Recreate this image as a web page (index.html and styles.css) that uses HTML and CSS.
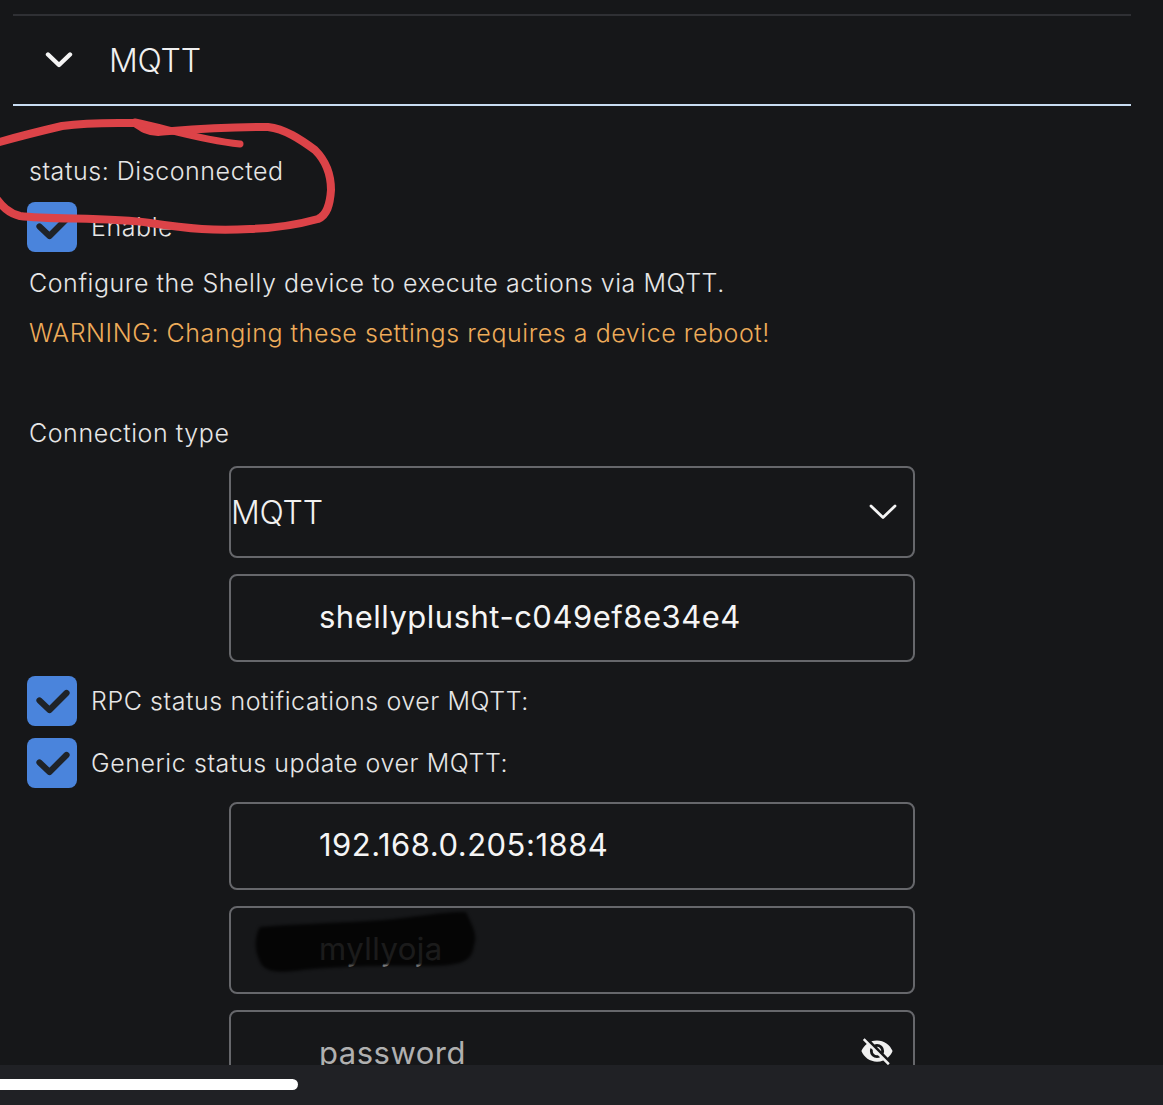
FILE: index.html
```html
<!DOCTYPE html>
<html lang="en">
  <head>
    <meta charset="UTF-8" />
    <meta name="viewport" content="width=device-width, initial-scale=1.0" />
    <title>MQTT</title>
    <link rel="stylesheet" href="styles.css">
  </head>
  <body>
    <div class="page">
      <main class="content">
        <section class="panel">
          <div class="panel-head">
            <svg class="head-chevron" viewBox="0 0 28 18" width="28" height="18">
              <path d="M3 3.5 L14 14 L25 3.5" fill="none" stroke="#f4f4f4" stroke-width="4.4" stroke-linecap="round" stroke-linejoin="round"></path>
            </svg>
            <span class="head-title">MQTT</span>
          </div>

          <div class="panel-body">
            <p class="line line-status">status: Disconnected</p>
            <div class="check-row check-enable">
              <span class="checkbox">
                <svg viewBox="0 0 50 50" width="50" height="50"><path d="M12.5 24.5 L22.5 34 L39.5 17" fill="none" stroke="#1f2328" stroke-width="6.2" stroke-linecap="round" stroke-linejoin="round"></path></svg>
              </span>
              <span class="check-label">Enable</span>
            </div>
            <p class="line">Configure the Shelly device to execute actions via MQTT.</p>
            <p class="line warning">WARNING: Changing these settings requires a device reboot!</p>
            <p class="line line-type">Connection type</p>

            <div class="field field-select">
              <span class="select-value">MQTT</span>
              <svg viewBox="0 0 28 18" width="28" height="18">
                <path d="M2 3 L14 14.5 L26 3" fill="none" stroke="#f4f4f4" stroke-width="2.8" stroke-linecap="round" stroke-linejoin="round"></path>
              </svg>
            </div>
            <div class="field field-tight"><span class="field-text">shellyplusht-c049ef8e34e4</span></div>

            <div class="check-row check-first">
              <span class="checkbox">
                <svg viewBox="0 0 50 50" width="50" height="50"><path d="M12.5 24.5 L22.5 34 L39.5 17" fill="none" stroke="#1f2328" stroke-width="6.2" stroke-linecap="round" stroke-linejoin="round"></path></svg>
              </span>
              <span class="check-label">RPC status notifications over MQTT:</span>
            </div>
            <div class="check-row check-second">
              <span class="checkbox">
                <svg viewBox="0 0 50 50" width="50" height="50"><path d="M12.5 24.5 L22.5 34 L39.5 17" fill="none" stroke="#1f2328" stroke-width="6.2" stroke-linecap="round" stroke-linejoin="round"></path></svg>
              </span>
              <span class="check-label">Generic status update over MQTT:</span>
            </div>

            <div class="field"><span class="field-text">192.168.0.205:1884</span></div>
            <div class="field field-masked">
              <span class="field-text">myllyoja</span>
              <svg class="scribble" viewBox="0 0 230 70" width="230" height="70">
                <path d="M6 16 C40 13 90 12 130 9 C160 6 195 0 212 1 C218 14 224 24 220 34 C218 50 210 55 170 55 C120 54 70 56 40 60 C20 62 8 60 5 48 C0 38 1 24 6 16Z" fill="#030303" fill-opacity="0.9"></path>
              </svg>
            </div>
            <div class="field field-password">
              <span class="field-text placeholder">password</span>
              <svg class="eye" viewBox="0 0 24 24" width="34" height="34">
                <path fill="#f0f0f0" d="M11.83,9L15,12.16C15,12.11 15,12.05 15,12A3,3 0 0,0 12,9C11.94,9 11.89,9 11.83,9M7.53,9.8L9.08,11.35C9.03,11.56 9,11.77 9,12A3,3 0 0,0 12,15C12.22,15 12.44,14.97 12.65,14.92L14.2,16.47C13.53,16.8 12.79,17 12,17A5,5 0 0,1 7,12C7,11.21 7.2,10.47 7.53,9.8M2,4.27L4.28,6.55L4.73,7C3.08,8.3 1.78,10 1,12C2.73,16.39 7,19.5 12,19.5C13.55,19.5 15.03,19.2 16.38,18.66L16.81,19.08L19.73,22L21,20.73L3.27,3M12,7A5,5 0 0,1 17,12C17,12.64 16.87,13.26 16.64,13.82L19.57,16.75C21.07,15.5 22.27,13.86 23,12C21.27,7.61 17,4.5 12,4.5C10.6,4.5 9.26,4.75 8,5.2L10.17,7.35C10.74,7.13 11.35,7 12,7Z"></path>
              </svg>
            </div>
          </div>
        </section>

        <!-- red pen mark drawn on top of the screenshot -->
        <svg class="annotation" viewBox="0 0 340 240" width="340" height="240">
          <path d="M-4 143 C20 136 45 130 62 126 C90 122 115 123 135 123 C142 128 148 132 158 132 C185 130 215 127 268 127 C285 129 300 139 315 150 C325 160 331 172 331 190 C330 205 327 215 318 219 C300 224 280 228 250 229 C215 231 190 229 150 223 C110 217 50 220 20 216 C8 213 2 206 -4 198" fill="none" stroke="#dc4348" stroke-width="8" stroke-linecap="round" stroke-linejoin="round"></path>
          <path d="M135 122 C165 128 200 140 240 144" fill="none" stroke="#dc4348" stroke-width="7" stroke-linecap="round"></path>
        </svg>
      </main>

      <footer class="scrollbar">
        <div class="scroll-thumb"></div>
      </footer>
    </div>
  </body>
</html>
```

FILE: styles.css
```css
* {
  box-sizing: border-box;
}
html,
body {
  margin: 0;
  height: 100%;
  background-color: #161719;
}
body {
  font-family: Inter, "Liberation Sans", sans-serif;
  color: #e6e6e6;
  overflow: hidden;
}
.page {
  height: 1105px;
  display: flex;
  flex-direction: column;
}
.content {
  position: relative;
  flex: 1;
  min-height: 0;
  overflow: hidden;
  padding: 14px 32px 0 13px;
}
/* --------------- */
.panel {
  border-top: 2px solid #2f3034;
}
.panel-head {
  height: 90px;
  display: flex;
  align-items: center;
  padding-left: 32px;
  border-bottom: 2px solid #c8dcf2;
}
.head-chevron {
  flex: none;
}
.head-title {
  margin-left: 36px;
  font-size: 32px;
  font-weight: 300;
  letter-spacing: -0.2px;
  color: #f0f0f0;
}
.panel-body {
  padding-left: 16px;
}
.line {
  margin: 0;
  height: 50px;
  line-height: 50px;
  font-size: 25px;
  font-weight: 300;
  letter-spacing: 0.55px;
}
.line-status {
  margin-top: 40px;
  margin-bottom: 6px;
}
.warning {
  color: #eeac5a;
}
.line-type {
  margin-top: 50px;
  margin-bottom: 8px;
}
/* --------------- */
.check-row {
  display: flex;
  align-items: center;
  height: 50px;
  margin-left: -2px;
  gap: 14px;
}
.check-enable {
  margin-bottom: 6px;
}
.check-second {
  margin-top: 12px;
  margin-bottom: 14px;
}
.checkbox {
  flex: none;
  width: 50px;
  height: 50px;
  border-radius: 8px;
  background-color: #4a84dc;
}
.checkbox svg {
  display: block;
}
.check-label {
  font-size: 25px;
  font-weight: 300;
  letter-spacing: 0.57px;
}
/* --------------- */
.field {
  position: relative;
  width: 686px;
  height: 88px;
  margin: 0 0 16px 200px;
  display: flex;
  align-items: center;
  padding-left: 88px;
  border: 2px solid #66676b;
  border-radius: 8px;
}
.field-tight {
  margin-bottom: 14px;
}
.field-select {
  height: 92px;
  justify-content: space-between;
  padding: 0 16px 0 0;
}
.select-value {
  font-size: 32px;
  font-weight: 300;
  letter-spacing: -0.2px;
  color: #f0f0f0;
}
.field-text {
  margin-bottom: 3px;
  font-size: 31px;
  letter-spacing: 0.5px;
  color: #f5f5f5;
}
.scribble {
  position: absolute;
  left: 23px;
  top: 3px;
  filter: blur(1.5px);
}
.field-password {
  align-items: flex-start;
  padding-top: 22px;
}
.placeholder {
  color: #b0b0b0;
}
.eye {
  position: absolute;
  right: 19px;
  top: 22px;
}
.annotation {
  position: absolute;
  left: 0;
  top: 0;
}
/* --------------- */
.scrollbar {
  flex: none;
  height: 40px;
  padding-top: 14px;
  background-color: #202125;
}
.scroll-thumb {
  width: 298px;
  height: 11px;
  border-radius: 0 6px 6px 0;
  background-color: #fff;
}
```
